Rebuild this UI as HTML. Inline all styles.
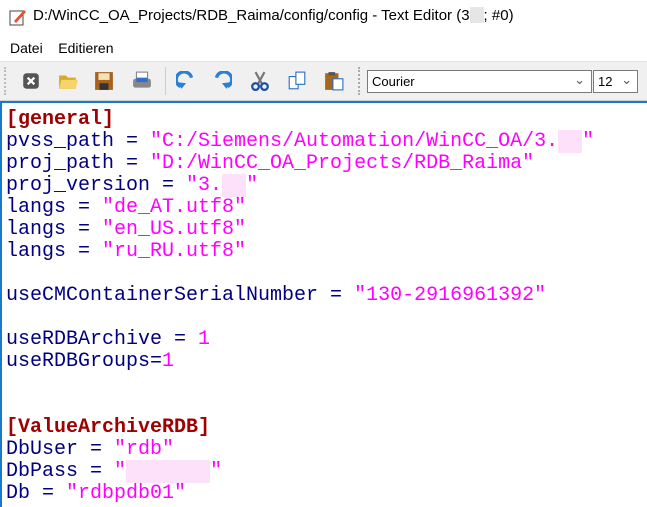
<!DOCTYPE html>
<html><head><meta charset="utf-8"><style>
*{margin:0;padding:0;box-sizing:border-box}
body{width:647px;height:507px;overflow:hidden;background:#fff;font-family:"Liberation Sans",sans-serif;position:relative}
.title{position:absolute;left:0;top:0;width:647px;height:34px;background:#fff}
.title span{position:absolute;left:33px;top:7px;font-size:15px;color:#000}
.menu{position:absolute;top:40px;left:10px;font-size:14px;color:#000}
.tb{position:absolute;top:61px;left:0;width:647px;height:40px;background:#f0f0f0;border-top:1px solid #e3e3e3;border-bottom:1px solid #d0d0d0}
.ic{position:absolute;top:9px;width:20px;height:20px}
.combo{position:absolute;top:8px;height:23px;background:#fff;border:1px solid #7a7a7a;font-size:13px;padding:3px 4px}
.ed{position:absolute;top:101px;left:0;width:647px;height:406px;border-top:2px solid #1979ca;border-left:2px solid #1979ca;background:#fff}
pre{position:absolute;left:4px;top:6px;font-family:"Liberation Mono",monospace;font-size:20px;line-height:22px;color:#000080}
.s{color:#ff00ff}.h{color:#a00000;font-weight:bold}.m{background:#fde0fa}
</style></head><body>
<div class="title">
<svg style="position:absolute;left:9px;top:8px" width="18" height="18"><rect x="1" y="3" width="13" height="14" fill="#fff" stroke="#444"/><path d="M5 13 L15 2 L17 4 L7 15 Z" fill="#e8502c"/></svg>
<span>D:/WinCC_OA_Projects/RDB_Raima/config/config - Text Editor (3<span style="position:static;display:inline-block;width:14px;height:16px;background:#e6e6e6;vertical-align:-3px"></span>; #0)</span></div>
<div class="menu">Datei&nbsp;&nbsp;&nbsp;&nbsp;Editieren</div>
<div class="tb">
<div style="position:absolute;left:4px;top:5px;width:2px;height:28px;border-left:2px dotted #bbb"></div>
<svg class="ic" style="left:21px" viewBox="0 0 18 18"><rect x="2" y="2" width="14" height="14" rx="3" fill="#555"/><path d="M6 6l6 6M12 6l-6 6" stroke="#fff" stroke-width="2"/></svg>
<svg class="ic" style="left:58px" viewBox="0 0 18 18"><path d="M1 4h6l2 2h7v10H1z" fill="#d9a92c"/><path d="M3 8h15l-2 8H1z" fill="#f5d46a"/></svg>
<svg class="ic" style="left:94px" viewBox="0 0 18 18"><rect x="1" y="1" width="16" height="16" fill="#a5631c"/><rect x="4" y="2" width="10" height="6" fill="#f6e2b8"/><rect x="5" y="11" width="8" height="6" fill="#333"/></svg>
<svg class="ic" style="left:132px" viewBox="0 0 18 18"><rect x="4" y="1" width="10" height="6" fill="#fff" stroke="#888"/><rect x="1" y="7" width="16" height="8" rx="2" fill="#888"/><rect x="4" y="6" width="10" height="4" fill="#2d6fd0"/></svg>
<div style="position:absolute;left:165px;top:5px;width:1px;height:28px;background:#ccc"></div>
<svg class="ic" style="left:176px" viewBox="0 0 18 18"><path d="M4 14 A7 7 0 1 1 14 6" fill="none" stroke="#2a7fd6" stroke-width="3"/><path d="M1 10l4 6 4-5z" fill="#2a7fd6"/></svg>
<svg class="ic" style="left:212px" viewBox="0 0 18 18"><path d="M14 14 A7 7 0 1 0 4 6" fill="none" stroke="#2a7fd6" stroke-width="3"/><path d="M17 10l-4 6-4-5z" fill="#2a7fd6"/></svg>
<svg class="ic" style="left:250px" viewBox="0 0 18 18"><path d="M5 1l6 11M13 1L7 12" stroke="#777" stroke-width="2"/><circle cx="5" cy="14" r="3" fill="none" stroke="#1c4fa0" stroke-width="2"/><circle cx="13" cy="14" r="3" fill="none" stroke="#1c4fa0" stroke-width="2"/></svg>
<svg class="ic" style="left:287px" viewBox="0 0 18 18"><rect x="2" y="5" width="8" height="11" fill="#fff" stroke="#2a6fc8"/><rect x="8" y="1" width="8" height="11" fill="#fff" stroke="#2a6fc8"/></svg>
<svg class="ic" style="left:324px" viewBox="0 0 18 18"><rect x="1" y="2" width="12" height="15" fill="#a5691c"/><rect x="4" y="1" width="6" height="3" fill="#555"/><rect x="8" y="7" width="9" height="10" fill="#fff" stroke="#2a6fc8"/></svg>
<div style="position:absolute;left:358px;top:5px;width:2px;height:28px;border-left:2px dotted #aaa"></div>
<div class="combo" style="left:367px;width:225px">Courier<span style="position:absolute;right:6px;top:1px;color:#555">&#8964;</span></div>
<div class="combo" style="left:593px;width:45px">12<span style="position:absolute;right:5px;top:1px;color:#555">&#8964;</span></div>
</div>
<div class="ed"><pre><span class="h">[general]</span>
pvss_path = <span class="s">"C:/Siemens/Automation/WinCC_OA/3.<span class="m">  </span>"</span>
proj_path = <span class="s">"D:/WinCC_OA_Projects/RDB_Raima"</span>
proj_version = <span class="s">"3.<span class="m">  </span>"</span>
langs = <span class="s">"de_AT.utf8"</span>
langs = <span class="s">"en_US.utf8"</span>
langs = <span class="s">"ru_RU.utf8"</span>

useCMContainerSerialNumber = <span class="s">"130-2916961392"</span>

useRDBArchive = <span class="s">1</span>
useRDBGroups=<span class="s">1</span>


<span class="h">[ValueArchiveRDB]</span>
DbUser = <span class="s">"rdb"</span>
DbPass = <span class="s">"<span class="m">       </span>"</span>
Db = <span class="s">"rdbpdb01"</span></pre></div>
</body></html>
